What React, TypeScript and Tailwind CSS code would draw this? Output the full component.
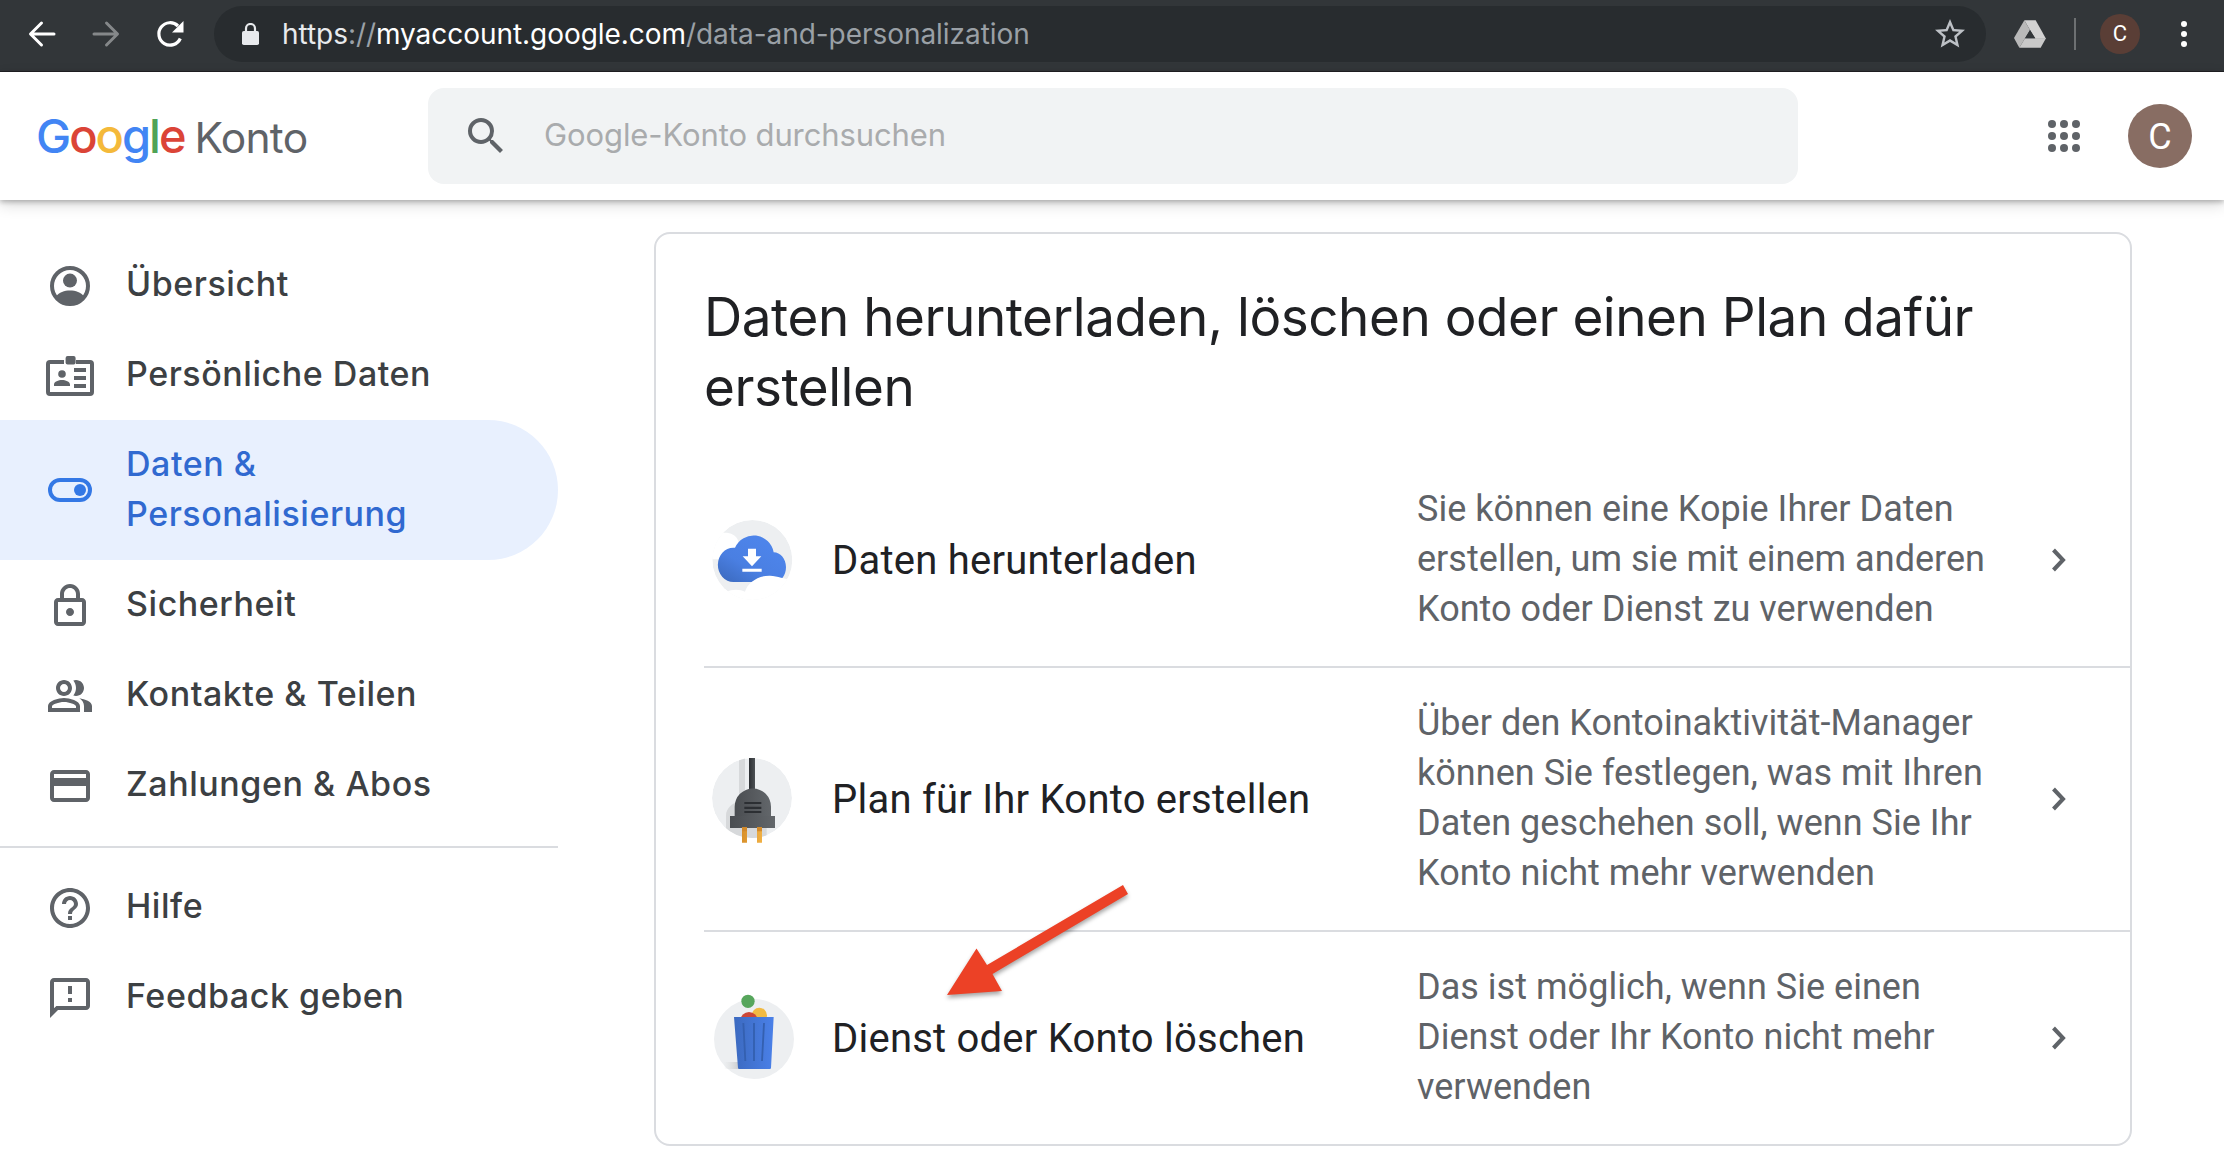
import type { ReactNode } from "react";

function Icon({ children, className = "size-12" }: { children: ReactNode; className?: string }) {
  return (
    <svg viewBox="0 0 24 24" fill="currentColor" className={`shrink-0 ${className}`} aria-hidden="true">
      {children}
    </svg>
  );
}

function BrowserBar() {
  return (
    <div className="flex h-[72px] items-start border-b border-[#202124] bg-[#323639] font-[Inter,sans-serif]">
      <div className="flex h-[68px] w-[214px] shrink-0 items-center pl-[28px]">
        <svg width="28" height="28" viewBox="0 0 28 28" fill="none" stroke="#fff" strokeWidth="3" strokeLinecap="round" strokeLinejoin="round">
          <path d="M26 14H3M13.500 3 2.500 14l11 11" />
        </svg>
        <svg width="28" height="28" viewBox="0 0 28 28" fill="none" stroke="#85888a" strokeWidth="3" strokeLinecap="round" strokeLinejoin="round" className="ml-9">
          <path d="M2 14h23M14.500 3l11 11-11 11" />
        </svg>
        <svg width="28" height="28" viewBox="0 0 28 28" className="ml-9">
          <path d="M24.300 18.500A11.200 11.200 0 1 1 22 6" fill="none" stroke="#fff" strokeWidth="3.200" />
          <path d="M27.500 1v11.500H16z" fill="#fff" />
        </svg>
      </div>
      <div className="mt-[6px] flex h-[56px] w-[1772px] shrink-0 items-center rounded-full bg-[#282c2f] pl-[28px] text-[28px] leading-[56px] whitespace-nowrap">
        <svg width="17" height="22" viewBox="0 0 17 22">
          <rect x="0" y="8" width="17" height="14" rx="1.800" fill="#e8eaed" />
          <path d="M4 9V5.500a4.500 4.500 0 0 1 9 0V9" fill="none" stroke="#e8eaed" strokeWidth="2.200" />
        </svg>
        <span className="-mt-px ml-[23px] tracking-[-0.050px]">
          <span className="text-[#e8eaed]">https</span>
          <span className="text-[#9aa0a6]">://</span>
          <span className="text-white">myaccount.google.com</span>
          <span className="text-[#9aa0a6]">/data-and-personalization</span>
        </span>
        <Icon className="mr-[18px] ml-auto size-9 text-[#bdc1c6]">
          <path d="M22 9.240l-7.190-.62L12 2 9.190 8.630 2 9.240l5.460 4.730L5.820 21 12 17.270 18.180 21l-1.630-7.030L22 9.240zM12 15.400l-3.760 2.270 1-4.280-3.320-2.880 4.380-.38L12 6.100l1.710 4.040 4.380.38-3.320 2.880 1 4.280L12 15.400z" />
        </Icon>
      </div>
      <div className="flex h-[68px] flex-1 items-center pl-[28px]">
        <svg width="32" height="28" viewBox="0 0 96 84">
          <path d="M31 1h34l31 55H64L48 30z" fill="#d2d2d2" />
          <path d="M31 1 0 54l16 29 32-53z" fill="#b9b9b9" />
          <path d="M16 83 33 55h63L80 83z" fill="#c9c9c9" />
          <path d="M48 30 33 55h31z" fill="#323639" />
        </svg>
        <div className="ml-[28px] h-8 w-[2px] bg-[#6d7072]" />
        <div className="ml-6 flex size-10 items-center justify-center rounded-full bg-[#5a3e36] font-[Roboto,sans-serif] text-[22px] leading-none text-white">C</div>
        <div className="ml-[41px] flex flex-col gap-1">
          <i className="size-1.5 rounded-full bg-white" />
          <i className="size-1.5 rounded-full bg-white" />
          <i className="size-1.5 rounded-full bg-white" />
        </div>
      </div>
    </div>
  );
}

function Header() {
  return (
    <header className="relative z-10 flex h-[128px] items-center bg-white shadow-[0_2px_5px_rgba(0,0,0,0.25),0_5px_14px_rgba(0,0,0,0.14)]">
      <div className="flex w-[428px] shrink-0 items-baseline pt-[2px] pl-[36px] whitespace-nowrap">
        <span className="text-[47px] leading-[64px] font-medium tracking-[-2px]">
          <span className="text-[#4285f4]">G</span>
          <span className="text-[#db4437]">o</span>
          <span className="text-[#f4b93a]">o</span>
          <span className="text-[#4285f4]">g</span>
          <span className="text-[#4fa356]">l</span>
          <span className="text-[#db4437]">e</span>
        </span>
        <span className="ml-[10px] text-[42.500px] tracking-[-0.700px] text-[#5f6368]">Konto</span>
      </div>
      <div className="flex h-[96px] w-[1370px] shrink-0 items-center rounded-2xl bg-[#f1f3f4] pl-[34px]">
        <Icon className="size-12 text-[#5f6368]">
          <path d="M15.500 14h-.79l-.28-.27A6.471 6.471 0 0 0 16 9.500 6.500 6.500 0 1 0 9.500 16c1.610 0 3.090-.59 4.230-1.570l.27.28v.79l5 4.990L20.490 19l-4.990-5zm-6 0C7.010 14 5 11.990 5 9.500S7.010 5 9.500 5 14 7.010 14 9.500 11.990 14 9.500 14z" />
        </Icon>
        <span className="-mt-px ml-[34px] text-[31px] tracking-[-0.100px] text-[#a9abad]">Google-Konto durchsuchen</span>
      </div>
      <div className="ml-[250px] grid grid-cols-3 gap-1">
        {Array.from({ length: 9 }, (_, i) => (
          <i key={i} className="size-2 rounded-full bg-[#5f6368]" />
        ))}
      </div>
      <div className="ml-12 flex size-16 items-center justify-center rounded-full bg-[#886d63] pt-[2px] font-[Roboto,sans-serif] text-[36px] leading-none text-white">C</div>
    </header>
  );
}

const icons = {
  overview: (
    <Icon>
      <circle cx="12" cy="12" r="9" fill="none" stroke="currentColor" strokeWidth="2" />
      <circle cx="12" cy="9.300" r="3.500" />
      <path d="M5 17.200C6.500 15.300 9.200 14.300 12 14.300s5.500 1 7 2.900L17 20.500l-5 1.300-5-1.300z" />
    </Icon>
  ),
  badge: (
    <Icon>
      <path d="M9 5H2a1 1 0 0 0-1 1v14a1 1 0 0 0 1 1h20a1 1 0 0 0 1-1V6a1 1 0 0 0-1-1h-7" fill="none" stroke="currentColor" strokeWidth="2" />
      <rect x="9.800" y="2" width="5" height="4.200" rx="1" />
      <circle cx="8" cy="11" r="1.900" />
      <path d="M4 17v-.8c0-1.300 2.300-2.200 4-2.200s4 .9 4 2.200v.8zM14 8h6v2h-6zM14 12h6v2h-6zM14 16h6v2h-6z" />
    </Icon>
  ),
  toggle: (
    <Icon>
      <rect x="2" y="7" width="20" height="10" rx="5" fill="none" stroke="currentColor" strokeWidth="2" />
      <circle cx="17" cy="12" r="3" />
    </Icon>
  ),
  lock: (
    <Icon>
      <path d="M18 8h-1V6c0-2.760-2.240-5-5-5S7 3.240 7 6v2H6c-1.100 0-2 .9-2 2v10c0 1.100.9 2 2 2h12c1.100 0 2-.9 2-2V10c0-1.100-.9-2-2-2zM9 6c0-1.660 1.340-3 3-3s3 1.340 3 3v2H9V6zm9 14H6V10h12v10zm-6-3c1.100 0 2-.9 2-2s-.9-2-2-2-2 .9-2 2 .9 2 2 2z" />
    </Icon>
  ),
  people: (
    <Icon>
      <path d="M16.670 13.130C18.040 14.060 19 15.320 19 17v3h4v-3c0-2.180-3.570-3.470-6.330-3.870zM15 12c2.210 0 4-1.790 4-4s-1.790-4-4-4c-.47 0-.91.1-1.330.24C14.500 5.270 15 6.580 15 8s-.5 2.730-1.330 3.760c.42.14.86.24 1.330.24zM9 12c2.210 0 4-1.790 4-4s-1.790-4-4-4-4 1.790-4 4 1.790 4 4 4zm0-6c1.100 0 2 .9 2 2s-.9 2-2 2-2-.9-2-2 .9-2 2-2zM9 13c-2.670 0-8 1.340-8 4v3h16v-3c0-2.660-5.330-4-8-4zm6 5H3v-.99C3.200 16.290 6.300 15 9 15s5.800 1.290 6 2v1z" />
    </Icon>
  ),
  card: (
    <Icon>
      <path d="M20 4H4c-1.110 0-1.990.89-1.990 2L2 18c0 1.110.89 2 2 2h16c1.110 0 2-.89 2-2V6c0-1.110-.89-2-2-2zm0 14H4v-6h16v6zm0-10H4V6h16v2z" />
    </Icon>
  ),
  help: (
    <Icon>
      <path d="M11 18h2v-2h-2v2zm1-16C6.480 2 2 6.480 2 12s4.480 10 10 10 10-4.480 10-10S17.520 2 12 2zm0 18c-4.410 0-8-3.590-8-8s3.590-8 8-8 8 3.590 8 8-3.590 8-8 8zm0-14c-2.210 0-4 1.790-4 4h2c0-1.100.9-2 2-2s2 .9 2 2c0 2-3 1.750-3 5h2c0-2.250 3-2.500 3-5 0-2.210-1.790-4-4-4z" />
    </Icon>
  ),
  feedback: (
    <Icon>
      <path d="M20 2H4c-1.100 0-2 .9-2 2v18l4-4h14c1.100 0 2-.9 2-2V4c0-1.100-.9-2-2-2zm0 14H5.170L4 17.170V4h16v12zM11 6h2v4h-2zM11 12h2v2h-2z" />
    </Icon>
  ),
};

function NavItem({ icon, label, active = false }: { icon: ReactNode; label: ReactNode; active?: boolean }) {
  return (
    <a
      className={
        active
          ? "flex h-[140px] items-center rounded-r-full bg-[#e8f0fe] pl-[46px] text-[#3069d0]"
          : "flex h-[90px] items-center pl-[46px] text-[#3c4043]"
      }
    >
      <span className={active ? "text-[#3478e5]" : "mt-[2px] text-[#5f6368]"}>{icon}</span>
      <span className="-mt-[3px] ml-8 text-[34px] leading-[50px] font-medium tracking-[0.550px]">{label}</span>
    </a>
  );
}

function Sidebar() {
  return (
    <nav className="w-[558px] shrink-0 pt-[40px]">
      <NavItem icon={icons.overview} label="Übersicht" />
      <NavItem icon={icons.badge} label="Persönliche Daten" />
      <NavItem active icon={icons.toggle} label={<>Daten &amp;<br />Personalisierung</>} />
      <NavItem icon={icons.lock} label="Sicherheit" />
      <NavItem icon={icons.people} label="Kontakte & Teilen" />
      <NavItem icon={icons.card} label="Zahlungen & Abos" />
      <div className="mt-4 mb-[14px] h-[2px] bg-[#dadce0]" />
      <NavItem icon={icons.help} label="Hilfe" />
      <NavItem icon={icons.feedback} label="Feedback geben" />
    </nav>
  );
}

function CloudArt() {
  return (
    <svg viewBox="66 60 240 240" className="size-20 overflow-visible">
      <defs>
        <linearGradient id="cloud" x1="0" y1="1" x2="0.700" y2="0.200">
          <stop offset="0" stopColor="#3a68bb" />
          <stop offset="0.500" stopColor="#4a7fe2" />
          <stop offset="1" stopColor="#4d84ea" />
        </linearGradient>
        <clipPath id="cloudDisc"><circle cx="187" cy="180" r="120" /></clipPath>
      </defs>
      <g clipPath="url(#cloudDisc)">
        <circle cx="187" cy="180" r="120" fill="#edeff1" />
        <path d="M60 112 95 99c22-3 42 4 50 24l4 55H60z" fill="#fff" />
      </g>
      <path d="M130 246a46 51 0 0 1 0-103h5a61 61 0 0 1 116 14c20 0 37 20 37 44s-14 45-36 45z" fill="url(#cloud)" />
      <g clipPath="url(#cloudDisc)">
        <path d="M165 275c8-28 40-49 75-48 28 1 50 15 75 10v70H110v-32c14-8 42-8 55 0z" fill="#fff" />
      </g>
      <path d="M174 146h24v23h16l-28 30-28-30h16zM157 206h58v9h-58z" fill="#fff" />
    </svg>
  );
}

function PlugArt() {
  return (
    <svg viewBox="66 57 240 240" className="size-20 overflow-visible">
      <defs>
        <linearGradient id="cord">
          <stop offset="0" stopColor="#2d3034" />
          <stop offset="1" stopColor="#4d5155" />
        </linearGradient>
        <linearGradient id="body">
          <stop offset="0" stopColor="#4a4d51" />
          <stop offset="1" stopColor="#62666a" />
        </linearGradient>
        <linearGradient id="prong">
          <stop offset="0" stopColor="#d9912b" />
          <stop offset="1" stopColor="#f0b044" />
        </linearGradient>
        <clipPath id="plugDisc"><circle cx="186" cy="174" r="120" /></clipPath>
      </defs>
      <g clipPath="url(#plugDisc)">
        <circle cx="186" cy="174" r="120" fill="#edeff1" />
        <path d="M147 40h18v150h65v110H100v-37h8v-37c0-20 20-40 39-40z" fill="#d7d9db" />
      </g>
      <path d="M177 54h18v100h-18z" fill="url(#cord)" />
      <path d="M134 230v-30a54 54 0 0 1 109 0v30z" fill="url(#body)" />
      <path d="M120 228h135v36H120z" fill="url(#body)" />
      <path d="M163 186h51v6h-51zM163 200h51v7h-51zM163 213h51v6h-51z" fill="#2c2f33" />
      <path d="M156 262h15v46h-15zM201 262h15v46h-15z" fill="url(#prong)" />
      <path d="M156 262h15v12h-15zM201 262h15v12h-15z" fill="#d2892a" />
    </svg>
  );
}

function BinArt() {
  return (
    <svg viewBox="66 54 240 240" className="size-20 overflow-visible">
      <defs>
        <linearGradient id="bin">
          <stop offset="0" stopColor="#3c6ac0" />
          <stop offset="1" stopColor="#4a80e8" />
        </linearGradient>
        <linearGradient id="binShade">
          <stop offset="0" stopColor="#dcdedf" stopOpacity="0" />
          <stop offset="1" stopColor="#c9cbcc" />
        </linearGradient>
      </defs>
      <circle cx="192" cy="177" r="120" fill="#edeff1" />
      <path d="M100 246h48v21h-44z" fill="url(#binShade)" />
      <circle cx="174" cy="64" r="20" fill="#57a65c" />
      <circle cx="208" cy="106" r="23" fill="#f1ba43" />
      <circle cx="177" cy="122" r="26" fill="#cb4737" />
      <path d="M132 111h119l-8 153q0 3-4 3h-91q-4 0-4-3z" fill="url(#bin)" />
      <path d="m160 129 6 114M192 129v114M222 129l-6 114" stroke="#3460b0" strokeWidth="5.500" fill="none" />
    </svg>
  );
}

function Row({ art, title, lines, className }: { art: ReactNode; title: string; lines: string[]; className: string }) {
  return (
    <div className={`ml-12 flex items-center border-[#dadce0] pl-2 ${className}`}>
      {art}
      <div className="mt-[2px] ml-10 w-[585px] shrink-0 text-[40px] leading-[50px] tracking-[0.230px] whitespace-nowrap text-[#202124]">{title}</div>
      <p className="-mt-[2px] w-[611px] shrink-0 text-[36px] leading-[50px] tracking-[0.030px] whitespace-nowrap text-[#5f6368]">
        {lines.map((line) => (
          <span key={line} className="block">{line}</span>
        ))}
      </p>
      <svg width="60" height="48" viewBox="0 0 60 48" fill="none" stroke="#5f6368" strokeWidth="4">
        <path d="m25.500 14 9.500 10-9.500 10" />
      </svg>
    </div>
  );
}

export default function App() {
  return (
    <div className="relative h-[1174px] w-[2224px] overflow-hidden bg-white font-[Inter,sans-serif]">
      <BrowserBar />
      <Header />
      <div className="flex items-start">
        <Sidebar />
        <section className="mt-8 ml-24 h-[914px] w-[1478px] shrink-0 rounded-2xl border-2 border-[#dadce0] font-[Roboto,sans-serif]">
          <h1 className="mb-8 ml-12 pt-12 font-[Inter,sans-serif] text-[53px] leading-[70px] tracking-[-0.460px] whitespace-nowrap text-[#202124]">
            Daten herunterladen, löschen oder einen Plan dafür
            <br />
            erstellen
          </h1>
          <Row
            className="h-[214px] border-b-2"
            art={<CloudArt />}
            title="Daten herunterladen"
            lines={["Sie können eine Kopie Ihrer Daten", "erstellen, um sie mit einem anderen", "Konto oder Dienst zu verwenden"]}
          />
          <Row
            className="h-[264px] border-b-2"
            art={<PlugArt />}
            title="Plan für Ihr Konto erstellen"
            lines={["Über den Kontoinaktivität-Manager", "können Sie festlegen, was mit Ihren", "Daten geschehen soll, wenn Sie Ihr", "Konto nicht mehr verwenden"]}
          />
          <Row
            className="h-[212px]"
            art={<BinArt />}
            title="Dienst oder Konto löschen"
            lines={["Das ist möglich, wenn Sie einen", "Dienst oder Ihr Konto nicht mehr", "verwenden"]}
          />
        </section>
      </div>
      <svg width="190" height="124" viewBox="0 0 190 124" className="absolute top-[880px] left-[942px] drop-shadow-[0_3px_2px_rgba(0,0,0,0.35)]">
        <path d="M181 5 45 85 34.500 68.500 5 115l55-4-9.500-17L186 14z" fill="#ec4126" />
      </svg>
    </div>
  );
}
